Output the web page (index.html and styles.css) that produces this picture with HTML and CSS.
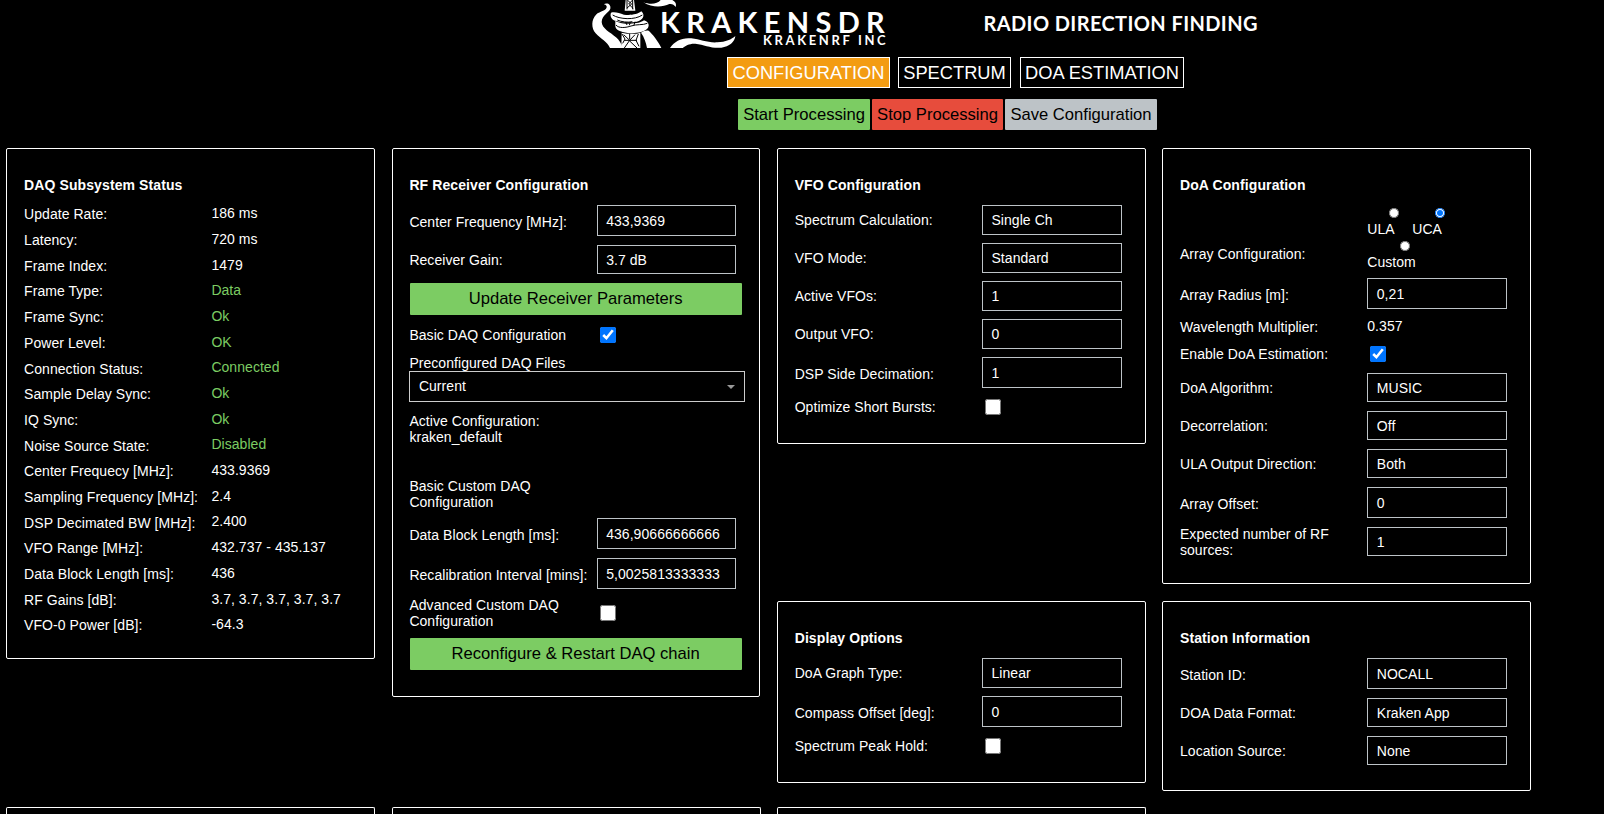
FILE: index.html
```
<!DOCTYPE html>
<html lang="en">
<head>
<meta charset="utf-8">
<title>KrakenSDR DoA</title>
<link rel="stylesheet" href="styles.css">
</head>
<body>
<header class="header">
  <svg class="logo" viewBox="0 0 990 144" width="330" height="48">
    <g fill="#fff">
      <path d="M70 14C80 6 94 12 91 26C87 38 66 44 65 66C66 86 90 96 108 112C118 121 125 132 128 144H90C82 126 62 116 47 100C33 84 34 58 48 44C60 33 82 33 80 19C78 13 73 13 70 14Z"/>
      <path d="M183 98C190 93 200 90 206 92C216 101 234 122 244 144H201C198 128 193 112 183 98Z"/>
      <path d="M190 7C212 15 232 12 242 0H277C287 5 290 13 287 21C282 14 277 11 268 12C248 22 217 24 190 7Z"/>
      <path d="M270 144C285 122 306 112 334 115C362 118 382 129 412 127C437 126 455 118 466 108C464 126 448 140 424 143C394 146 374 134 346 131C328 130 317 137 308 144Z"/>
      <path d="M137 0H162L166 32H134Z"/>
      <path d="M93 38C105 34 118 40 132 44C150 47 174 43 184 34C197 46 189 61 170 65C151 69 104 68 96 56C91 50 91 43 93 38Z"/>
      <path d="M106 62C117 70 133 71 149 71C170 71 184 67 192 61C207 66 209 77 203 85C192 98 166 101 143 99C122 97 104 89 106 76Z"/>
      <path d="M125 98L141 101H171L181 98V144H124Z"/>
    </g>
    <g fill="none" stroke="#000" stroke-width="3">
      <path d="M142 0L155 12L141 24M158 0L146 12L160 26M141 0V28M158 0V28"/>
      <path d="M98 45C118 58 164 61 187 45M112 60C123 66 145 68 157 65M108 75C116 86 139 83 153 78C171 72 188 76 202 70"/>
      <path d="M131 104L149 121L133 144M165 104L148 122L171 144M133 121H171M149 101V118M126 102L135 117L128 130M175 102L168 121L177 139"/>
      <path d="M137 66L141 75M151 66L148 76M165 65L162 75"/>
    </g>
    <g class="logo-text">
      <text x="240" y="98" font-size="87" textLength="674">KRAKENSDR</text>
      <text x="549" y="136" font-size="39" textLength="368">KRAKENRF INC</text>
    </g>
  </svg>
  <svg class="tagline" viewBox="0 0 290 48" width="290" height="48">
    <text x="1.5" y="30.5" font-size="20" textLength="274">RADIO DIRECTION FINDING</text>
  </svg>
</header>
<nav class="tabs">
  <a class="tab active w-conf">CONFIGURATION</a>
  <a class="tab w-spec">SPECTRUM</a>
  <a class="tab w-doa">DOA ESTIMATION</a>
</nav>
<div class="actions">
  <button class="btn green w-start">Start Processing</button>
  <button class="btn red w-stop">Stop Processing</button>
  <button class="btn gray w-save">Save Configuration</button>
</div>
<main class="cards">
  <section class="card tall status">
    <h2>DAQ Subsystem Status</h2>
    <div class="stat"><span>Update Rate:</span><b>186 ms</b></div>
    <div class="stat"><span>Latency:</span><b>720 ms</b></div>
    <div class="stat"><span>Frame Index:</span><b>1479</b></div>
    <div class="stat ok"><span>Frame Type:</span><b>Data</b></div>
    <div class="stat ok"><span>Frame Sync:</span><b>Ok</b></div>
    <div class="stat ok"><span>Power Level:</span><b>OK</b></div>
    <div class="stat ok"><span>Connection Status:</span><b>Connected</b></div>
    <div class="stat ok"><span>Sample Delay Sync:</span><b>Ok</b></div>
    <div class="stat ok"><span>IQ Sync:</span><b>Ok</b></div>
    <div class="stat ok"><span>Noise Source State:</span><b>Disabled</b></div>
    <div class="stat"><span>Center Frequecy [MHz]:</span><b>433.9369</b></div>
    <div class="stat"><span>Sampling Frequency [MHz]:</span><b>2.4</b></div>
    <div class="stat"><span>DSP Decimated BW [MHz]:</span><b>2.400</b></div>
    <div class="stat"><span>VFO Range [MHz]:</span><b>432.737 - 435.137</b></div>
    <div class="stat"><span>Data Block Length [ms]:</span><b>436</b></div>
    <div class="stat"><span>RF Gains [dB]:</span><b>3.7, 3.7, 3.7, 3.7, 3.7</b></div>
    <div class="stat"><span>VFO-0 Power [dB]:</span><b>-64.3</b></div>
  </section>

  <section class="card tall receiver">
    <h2>RF Receiver Configuration</h2>
    <div class="row num"><label>Center Frequency [MHz]:</label><div class="field">433,9369</div></div>
    <div class="row sel"><label>Receiver Gain:</label><div class="field">3.7 dB</div></div>
    <button class="btn green wide">Update Receiver Parameters</button>
    <div class="row check daq"><label>Basic DAQ Configuration</label><input type="checkbox" checked></div>
    <div class="files">Preconfigured DAQ Files</div>
    <div class="dropdown"><span>Current</span><i class="arrow"></i></div>
    <div class="active-conf">Active Configuration:<br>kraken_default</div>
    <div class="custom-conf">Basic Custom DAQ<br>Configuration</div>
    <div class="row num"><label>Data Block Length [ms]:</label><div class="field">436,90666666666</div></div>
    <div class="row num"><label>Recalibration Interval [mins]:</label><div class="field">5,0025813333333</div></div>
    <div class="row check adv"><label>Advanced Custom DAQ Configuration</label><input type="checkbox"></div>
    <button class="btn green wide">Reconfigure &amp; Restart DAQ chain</button>
  </section>

  <section class="card short">
    <h2>VFO Configuration</h2>
    <div class="row sel"><label>Spectrum Calculation:</label><div class="field">Single Ch</div></div>
    <div class="row sel"><label>VFO Mode:</label><div class="field">Standard</div></div>
    <div class="row sel"><label>Active VFOs:</label><div class="field">1</div></div>
    <div class="row sel"><label>Output VFO:</label><div class="field">0</div></div>
    <div class="row num"><label>DSP Side Decimation:</label><div class="field">1</div></div>
    <div class="row check"><label>Optimize Short Bursts:</label><input type="checkbox"></div>
  </section>

  <section class="card">
    <h2>DoA Configuration</h2>
    <div class="row array">
      <label>Array Configuration:</label>
      <div class="radios">
        <label class="radio ula"><input type="radio" name="array">ULA</label>
        <label class="radio uca"><input type="radio" name="array" checked>UCA</label>
        <label class="radio custom"><input type="radio" name="array">Custom</label>
      </div>
    </div>
    <div class="row num"><label>Array Radius [m]:</label><div class="field">0,21</div></div>
    <div class="stat wave"><span>Wavelength Multiplier:</span><b>0.357</b></div>
    <div class="row check doa"><label>Enable DoA Estimation:</label><input type="checkbox" checked></div>
    <div class="row sel"><label>DoA Algorithm:</label><div class="field">MUSIC</div></div>
    <div class="row sel"><label>Decorrelation:</label><div class="field">Off</div></div>
    <div class="row sel"><label>ULA Output Direction:</label><div class="field">Both</div></div>
    <div class="row num"><label>Array Offset:</label><div class="field">0</div></div>
    <div class="row sel two"><label>Expected number of RF sources:</label><div class="field">1</div></div>
  </section>

  <section class="card display">
    <h2>Display Options</h2>
    <div class="row sel"><label>DoA Graph Type:</label><div class="field">Linear</div></div>
    <div class="row num"><label>Compass Offset [deg]:</label><div class="field">0</div></div>
    <div class="row check"><label>Spectrum Peak Hold:</label><input type="checkbox"></div>
  </section>

  <section class="card station">
    <h2>Station Information</h2>
    <div class="row num"><label>Station ID:</label><div class="field">NOCALL</div></div>
    <div class="row sel"><label>DOA Data Format:</label><div class="field">Kraken App</div></div>
    <div class="row sel"><label>Location Source:</label><div class="field">None</div></div>
  </section>

  <section class="card"></section>
  <section class="card"></section>
  <section class="card"></section>
</main>
</body>
</html>
```
FILE: styles.css
```
* { box-sizing: border-box; }

html, body { height: 100%; }

body {
  margin: 0;
  overflow: hidden;
  background: #000;
  color: #fff;
  font: 14px/16px "Liberation Sans", Arial, sans-serif;
}

.header { display: flex; height: 48px; padding-left: 580px; gap: 72px; }
.logo, .tagline { display: block; flex: none; }
.logo-text, .tagline { font-family: Lato, sans-serif; font-weight: 700; fill: #fff; }

.tabs { display: flex; padding: 9px 0 0 727px; }
.tab {
  height: 31px;
  border: 1px solid #fff;
  font-size: 18.3px;
  line-height: 30px;
  text-align: center;
  white-space: nowrap;
}
.tab.active { background: #f39c12; }
.w-conf { width: 163px; margin-right: 8px; }
.w-spec { width: 113px; margin-right: 9px; }
.w-doa { width: 164px; }

.actions { display: flex; padding: 11px 0 0 738px; }
.btn {
  height: 31px;
  padding: 0;
  border: 0;
  border-radius: 1px;
  color: #000;
  font: 16.6px/30px "Liberation Sans", Arial, sans-serif;
  text-align: center;
  white-space: nowrap;
}
.green { background: #7ccc63; }
.red { background: #e74c3c; }
.gray { background: #bdc3c7; }
.w-start { width: 132px; margin-right: 2px; }
.w-stop { width: 131px; margin-right: 2px; }
.w-save { width: 152px; }
.wide { display: block; width: 332px; height: 32px; margin-left: 0.3px; }

.cards {
  display: grid;
  grid-template-columns: repeat(4, 369px);
  grid-template-rows: 436px 189px 7px;
  gap: 17px 16.3px;
  padding: 18px 0 0 6.4px;
  align-items: start;
  letter-spacing: 0.05px;
}
.card {
  padding: 28px 0 0 16.7px;
  border: 1px solid #fff;
  border-radius: 2px;
  align-self: stretch;
}
.card:empty { padding: 0; border-bottom: 0; border-radius: 2px 2px 0 0; }
.tall { grid-row: 1 / 3; align-self: start; }
.status { height: 511px; }
.receiver { height: 549px; width: 368px; }
.short { height: 296px; align-self: start; }
.display { height: 182px; align-self: start; grid-column: 3; }
.station { height: 190px; }
.card h2 { margin: 0 0 12px; font-size: 14px; line-height: 16px; letter-spacing: 0.1px; }

.stat { display: flex; height: 25.7px; padding-top: 1.4px; }
.stat span { width: 187.3px; }
.stat b { margin-top: -1.2px; font-weight: 400; }
.ok b { color: #7ccc63; }

.row { display: flex; }
.row > label { width: 187.3px; flex: none; }
.field {
  width: 139.7px;
  border: 1px solid #bdc3c7;
  padding-left: 8.5px;
  white-space: nowrap;
}
.num { height: 39.8px; }
.num > label { padding-top: 9px; }
.num .field { height: 31px; line-height: 30px; }
.sel { height: 38px; }
.sel > label { padding-top: 7px; }
.sel .field { height: 29.6px; line-height: 28px; }

.check { height: 20px; align-items: center; }
.check > label { width: 190.5px; }
input[type="checkbox"] { width: 16px; height: 16px; margin: 0; accent-color: #0075ff; }

.daq { height: 40px; }
.files { height: 16px; }
.dropdown {
  display: flex;
  justify-content: space-between;
  align-items: center;
  width: 336px;
  height: 31px;
  margin-left: -0.5px;
  padding: 0 9px 1px 9px;
  border: 1px solid #ccc;
}
.arrow { border: 4px solid transparent; border-top-color: #999; border-bottom: 0; margin-top: 3px; }
.active-conf { padding-top: 11px; }
.custom-conf { padding: 33px 0 8px; }
.adv { height: 40.4px; padding-bottom: 9px; }
.adv > label { padding-right: 20px; }

.array { height: 73px; }
.array > label { padding-top: 41px; }
.radios { display: grid; grid-template-columns: 45px 60px; grid-template-rows: 33px 33px; }
.radio { display: flex; flex-direction: column; align-items: flex-start; }
.radio input { width: 10px; height: 10px; margin: 3px 0 3px 22px; accent-color: #0075ff; }
.radio.uca input { margin-left: 23px; }
.radio.custom input { margin-left: 33px; }
.wave { height: 23px; }
.doa { height: 32px; padding-bottom: 6px; }
.two > label { padding: 0 30px 0 0; margin-top: -0.5px; }
```
